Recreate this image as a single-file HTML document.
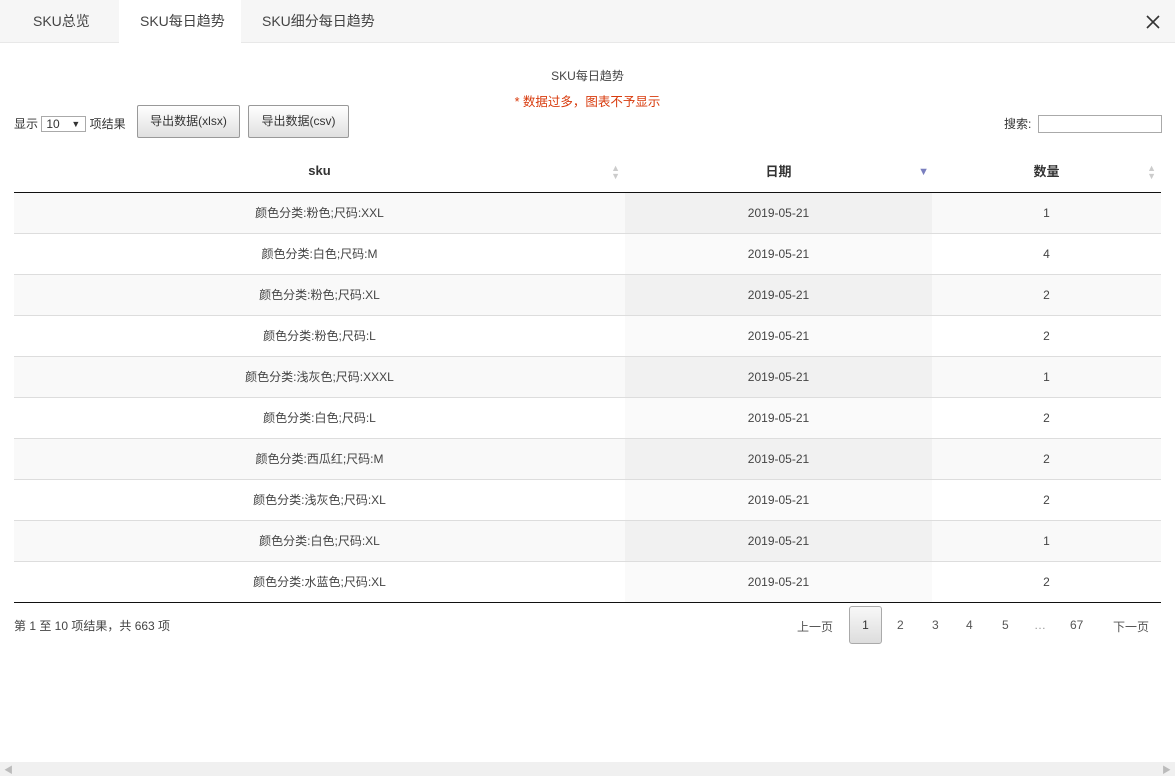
<!DOCTYPE html>
<html><head><meta charset="utf-8"><style>
*{margin:0;padding:0;box-sizing:border-box}
body{width:1175px;height:776px;background:#fff;font-family:"Liberation Sans","Noto Sans CJK SC",sans-serif;font-size:12px;color:#333;position:relative;overflow:hidden}
.tabs{position:absolute;left:0;top:0;width:1175px;height:43px;background:#f6f6f6;border-bottom:1px solid #e8e8e8}
.tab{position:absolute;top:0;height:43px;line-height:42px;font-size:14px;color:#444}
.tab.act{background:#fff;height:44px}
.close{position:absolute;left:1146px;top:15px}
.title{position:absolute;top:67px;width:1175px;text-align:center;color:#444}
.warn{position:absolute;top:91px;width:1175px;text-align:center;color:#d83a0c;font-size:12.5px}
.len{position:absolute;left:14px;top:116px;line-height:16px}
.sel{display:inline-block;width:45px;height:16px;border:1px solid #aaa;vertical-align:top;position:relative;padding-left:4px;font-size:12px;line-height:14px}
.sel:after{content:"▼";position:absolute;right:5px;top:0;font-size:9px}
.btn{position:absolute;top:105px;height:33px;border:1px solid #999;border-radius:2px;background:linear-gradient(#fff,#e0e0e0);line-height:31px;text-align:center;color:#333}
.search{position:absolute;left:1004px;top:116px;line-height:16px}
.search span{position:absolute;left:34px;top:-1px;width:124px;height:18px;border:1px solid #aaa}
table{position:absolute;left:14px;top:150px;width:1147px;border-collapse:collapse}
th{height:42px;border-bottom:1px solid #111;font-weight:bold;font-size:13px;position:relative;color:#333}
td{height:41px;border-bottom:1px solid #ddd;text-align:center;color:#444}
tr.o td{background:#f9f9f9}
tr.o td.s{background:#f1f1f1}
tr.e td.s{background:#fafafa}
tbody tr:last-child td{border-bottom:1px solid #111}
.sa{position:absolute;right:5px;top:14px;color:#ccc;font-size:9px;line-height:8px}
.sd{position:absolute;right:3px;top:16px;color:#7a7fbf;font-size:11px}
.info{position:absolute;left:14px;top:617px;color:#444}
.pg{position:absolute;top:618px;color:#555}
.cur{position:absolute;left:849px;top:606px;width:33px;height:38px;border:1px solid #aaa;border-radius:3px;background:linear-gradient(#f8f8f8,#ddd);text-align:center;line-height:37px}
.sb{position:absolute;left:0;top:762px;width:1175px;height:14px;background:#f0f0f0}
</style></head><body>
<div class="tabs">
<div class="tab" style="left:33px">SKU总览</div>
<div class="tab act" style="left:119px;width:122px;padding-left:21px">SKU每日趋势</div>
<div class="tab" style="left:262px">SKU细分每日趋势</div>
<svg class="close" width="14" height="14" viewBox="0 0 14 14"><path d="M1 1L13 13M13 1L1 13" stroke="#333" stroke-width="1.6"/></svg>
</div>
<div class="title">SKU每日趋势</div>
<div class="warn">* 数据过多，图表不予显示</div>
<div class="len">显示 <span class="sel">10</span> 项结果</div>
<div class="btn" style="left:137px;width:103px">导出数据(xlsx)</div>
<div class="btn" style="left:248px;width:101px">导出数据(csv)</div>
<div class="search">搜索:<span></span></div>
<table>
<thead><tr><th style="width:611px">sku<span class="sa">▲<br>▼</span></th><th style="width:307px">日期<span class="sd">▼</span></th><th>数量<span class="sa">▲<br>▼</span></th></tr></thead>
<tbody>
<tr class="o"><td>颜色分类:粉色;尺码:XXL</td><td class="s">2019-05-21</td><td>1</td></tr>
<tr class="e"><td>颜色分类:白色;尺码:M</td><td class="s">2019-05-21</td><td>4</td></tr>
<tr class="o"><td>颜色分类:粉色;尺码:XL</td><td class="s">2019-05-21</td><td>2</td></tr>
<tr class="e"><td>颜色分类:粉色;尺码:L</td><td class="s">2019-05-21</td><td>2</td></tr>
<tr class="o"><td>颜色分类:浅灰色;尺码:XXXL</td><td class="s">2019-05-21</td><td>1</td></tr>
<tr class="e"><td>颜色分类:白色;尺码:L</td><td class="s">2019-05-21</td><td>2</td></tr>
<tr class="o"><td>颜色分类:西瓜红;尺码:M</td><td class="s">2019-05-21</td><td>2</td></tr>
<tr class="e"><td>颜色分类:浅灰色;尺码:XL</td><td class="s">2019-05-21</td><td>2</td></tr>
<tr class="o"><td>颜色分类:白色;尺码:XL</td><td class="s">2019-05-21</td><td>1</td></tr>
<tr class="e"><td>颜色分类:水蓝色;尺码:XL</td><td class="s">2019-05-21</td><td>2</td></tr>
</tbody></table>
<div class="info">第 1 至 10 项结果，共 663 项</div>
<div class="pg" style="left:797px">上一页</div>
<div class="cur">1</div>
<div class="pg" style="left:897px">2</div>
<div class="pg" style="left:932px">3</div>
<div class="pg" style="left:966px">4</div>
<div class="pg" style="left:1002px">5</div>
<div class="pg" style="left:1034px;color:#999">…</div>
<div class="pg" style="left:1070px">67</div>
<div class="pg" style="left:1113px">下一页</div>
<div class="sb"><span style="position:absolute;left:4px;top:1px;font-size:9px;color:#bbb">◀</span><span style="position:absolute;right:4px;top:1px;font-size:9px;color:#bbb">▶</span></div>
</body></html>
